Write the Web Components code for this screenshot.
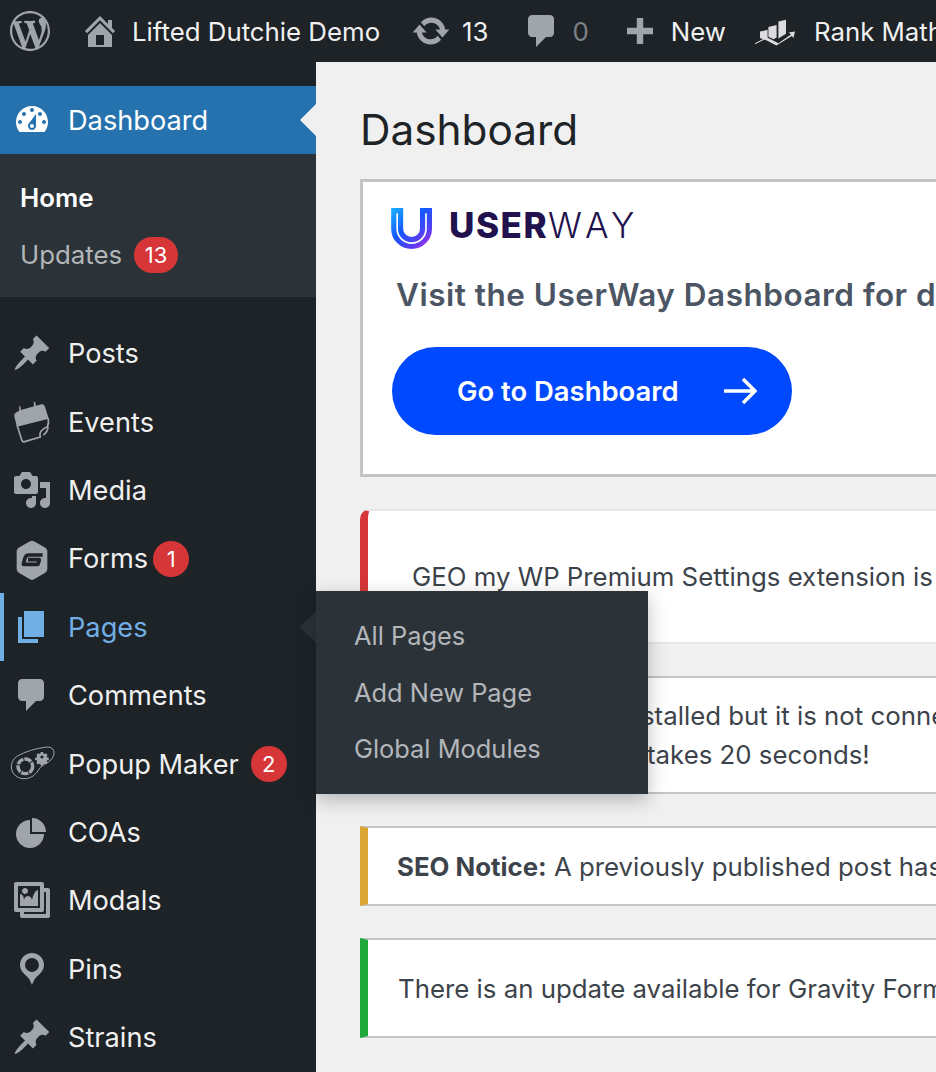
<!DOCTYPE html>
<html lang="en">
<head>
<meta charset="utf-8">
<title>Dashboard</title>
<style>
html, body { margin: 0; height: 1072px; overflow: hidden; background: #f0f0f1; font-family: Inter, "Liberation Sans", sans-serif; }
.page { display: flex; flex-direction: column; height: 1072px; }
.below { display: flex; flex: 1; min-height: 0; }
</style>
</head>
<body>
<div class="page">
  <admin-bar>
    <bar-item icon="wp" gap="0" pad="10" end="30"></bar-item>
    <bar-item icon="home" gap="12" pad="0" end="31">Lifted Dutchie Demo</bar-item>
    <bar-item icon="update" gap="11" pad="0" end="33">13</bar-item>
    <bar-item icon="comment" gap="11" pad="0" end="31" dim>0</bar-item>
    <bar-item icon="plus" gap="11" pad="0" end="29">New</bar-item>
    <bar-item icon="rank" gap="19" pad="0" end="0">Rank Math</bar-item>
  </admin-bar>
  <div class="below">
    <side-menu>
      <menu-item icon="dashboard" current>Dashboard</menu-item>
      <sub-menu>
        <sub-link strong>Home</sub-link>
        <sub-link>Updates<count-badge wide>13</count-badge></sub-link>
      </sub-menu>
      <menu-item icon="pin" first>Posts</menu-item>
      <menu-item icon="events">Events</menu-item>
      <menu-item icon="media">Media</menu-item>
      <menu-item icon="forms">Forms<count-badge tight>1</count-badge></menu-item>
      <menu-item icon="page" open>Pages
        <fly-menu slot="fly">
          <fly-link>All Pages</fly-link>
          <fly-link>Add New Page</fly-link>
          <fly-link>Global Modules</fly-link>
        </fly-menu>
      </menu-item>
      <menu-item icon="comment">Comments</menu-item>
      <menu-item icon="popup">Popup Maker<count-badge>2</count-badge></menu-item>
      <menu-item icon="pie">COAs</menu-item>
      <menu-item icon="gallery">Modals</menu-item>
      <menu-item icon="location">Pins</menu-item>
      <menu-item icon="pin">Strains</menu-item>
    </side-menu>
    <main-area>
      <userway-card></userway-card>
      <wp-notice tone="error" radius height="135" left="44">GEO my WP Premium Settings extension is</wp-notice>
      <wp-notice tone="success" height="118" left="279" style="text-indent:-6px">stalled but it is not conne<br>takes 20 seconds!</wp-notice>
      <wp-notice tone="warning" height="80" left="29"><b>SEO Notice:</b> A previously published post has</wp-notice>
      <wp-notice tone="success" height="100" left="30">There is an update available for Gravity Form</wp-notice>
    </main-area>
  </div>
</div>
<script>
const ICONS = {
  wp: '<path d="M20 10c0-5.51-4.49-10-10-10C4.48 0 0 4.49 0 10c0 5.52 4.48 10 10 10 5.51 0 10-4.48 10-10zM7.78 15.37L4.37 6.22c.55-.02 1.17-.08 1.17-.08.5-.06.44-1.13-.06-1.11 0 0-1.45.11-2.37.11-.18 0-.37 0-.58-.01C4.12 2.69 6.87 1.11 10 1.11c2.33 0 4.45.87 6.05 2.34-.68-.11-1.65.39-1.65 1.58 0 .74.45 1.36.9 2.1.35.61.55 1.36.55 2.46 0 1.49-1.4 5-1.4 5l-3.03-8.37c.54-.02.82-.17.82-.17.5-.05.44-1.25-.06-1.22 0 0-1.44.12-2.38.12-.87 0-2.33-.12-2.33-.12-.5-.03-.56 1.2-.06 1.22l.92.08 1.26 3.41zM17.41 10c.24-.64.74-1.87.43-4.25.7 1.29 1.05 2.71 1.05 4.25 0 3.29-1.73 6.24-4.4 7.78.97-2.59 1.94-5.2 2.92-7.78zM6.1 18.09C3.12 16.65 1.11 13.53 1.11 10c0-1.3.23-2.48.72-3.59C3.25 10.3 4.67 14.2 6.1 18.09zm4.03-6.63l2.58 6.98c-.86.29-1.76.45-2.71.45-.79 0-1.57-.11-2.29-.33.81-2.38 1.62-4.74 2.42-7.1z"/>',
  home: '<path d="M16 8.5l1.53 1.53-1.06 1.06L10 4.62l-6.47 6.47-1.06-1.06L10 2.5l4 4v-2h2v4zm-6-2.46l6 5.99V18H4v-5.97zM12 17v-5H8v5h4z"/>',
  update: '<path d="M10.2 3.28c3.53 0 6.43 2.61 6.92 6h2.08l-3.5 4-3.5-4h2.32c-.45-1.97-2.21-3.45-4.32-3.45-1.45 0-2.73.71-3.54 1.78L4.95 5.66C6.23 4.2 8.11 3.28 10.2 3.28zm-.4 13.44c-3.52 0-6.43-2.61-6.92-6H.8l3.5-4c1.17 1.33 2.33 2.67 3.5 4H5.48c.45 1.97 2.21 3.45 4.32 3.45 1.45 0 2.73-.71 3.54-1.78l1.71 1.95c-1.28 1.46-3.15 2.38-5.25 2.38z"/>',
  comment: '<path d="M5 2h9c1.1 0 2 .9 2 2v7c0 1.1-.9 2-2 2h-2l-5 5v-5H5c-1.1 0-2-.9-2-2V4c0-1.1.9-2 2-2z"/>',
  plus: '<path d="M8.4 3.5h3.2v4.9h4.9v3.2h-4.9v4.9H8.4v-4.9H3.5V8.4h4.9z"/>',
  rank: '<g fill="#dcdcde"><path d="M2.5 10.3l3.8-.9v4.5l-.9.6-2.9-1zM6.7 8l4.1-1v6.3l-1.500.8-2.600-1.200zM11.700 5.200l3.800-.8v7l-3.800 2.400z"/><path d="M0 16.100l5.900-3 5.800 3 6.300-4.300-1.200-1 3.200-.6-.8 3.300-.8-1-7.700 4.700-5.800-3-4.800 2.400z"/></g>',
  dashboard: '<path d="M3.76 16h12.48c1.1-1.37 1.76-3.11 1.76-5 0-4.42-3.58-8-8-8s-8 3.58-8 8c0 1.89.66 3.63 1.76 5zM10 4c.55 0 1 .45 1 1s-.45 1-1 1-1-.45-1-1 .45-1 1-1zM6 6c.55 0 1 .45 1 1s-.45 1-1 1-1-.45-1-1 .45-1 1-1zm8 0c.55 0 1 .45 1 1s-.45 1-1 1-1-.45-1-1 .45-1 1-1zm-5.37 5.55L12 7v6c0 1.1-.9 2-2 2s-2-.9-2-2c0-.57.24-1.08.63-1.45zM4 10c.55 0 1 .45 1 1s-.45 1-1 1-1-.45-1-1 .45-1 1-1zm12 0c.55 0 1 .45 1 1s-.45 1-1 1-1-.45-1-1 .45-1 1-1zm-5 3c0-.55-.45-1-1-1s-1 .45-1 1 .45 1 1 1 1-.45 1-1z"/>',
  pin: '<path d="M10.44 3.02l1.82-1.82 6.36 6.35-1.83 1.82c-1.05-.68-2.48-.57-3.41.36l-.75.75c-.92.93-1.04 2.35-.35 3.41l-1.83 1.82-2.41-2.41-2.8 2.79c-.42.42-3.38 2.71-3.8 2.29s1.86-3.39 2.28-3.81l2.79-2.79L4.1 9.36l1.83-1.82c1.05.69 2.48.57 3.4-.36l.75-.75c.93-.92 1.05-2.35.36-3.41z"/>',
  events: '<path d="M19 62Q17 52 28 47L34 44L33 31H37L39 42L78 31L77 17H81L84 29L100 25Q108 24 111 32L122 68L27 92z"/><path fill="none" stroke="currentColor" stroke-width="5" stroke-linejoin="round" d="M27 86L42 134Q44 139 50 137L97 123Q90 104 118 92Q124 80 120 66M120 92Q120 106 106 117"/>',
  media: '<path d="M13 11V4c0-.55-.45-1-1-1h-1.67L9 1H5L3.67 3H2c-.55 0-1 .45-1 1v7c0 .55.45 1 1 1h10c.55 0 1-.45 1-1zM7 4.5c1.38 0 2.5 1.12 2.5 2.5S8.38 9.5 7 9.5 4.5 8.38 4.5 7 5.62 4.5 7 4.5zM14 6h5v10.5c0 1.38-1.12 2.5-2.5 2.5S14 17.88 14 16.5s1.12-2.5 2.5-2.5c.17 0 .34.02.5.05V9h-3V6zm-4 8.05V13h2v3.5c0 1.38-1.12 2.5-2.5 2.5S7 17.88 7 16.5 8.12 14 9.5 14c.17 0 .34.02.5.05z"/>',
  forms: '<path d="M66 16Q72 12 78 16L112 35Q118 39 118 45V100Q118 106 112 110L78 130Q72 133 66 130L32 110Q26 106 26 100V45Q26 39 32 35z"/><path fill="none" stroke="#1d2327" stroke-width="11" stroke-linejoin="round" d="M104 57H62Q54 57 51 66L46 85H90L94 71H60"/>',
  popup: '<path fill="none" stroke="currentColor" stroke-width="3" d="M16 78Q14 56 34 42Q70 22 122 15Q146 14 144 36Q140 56 116 66Q102 74 92 92Q76 112 48 110Q20 104 16 78z"/><circle cx="58" cy="73" r="22" fill="none" stroke="currentColor" stroke-width="10" stroke-dasharray="22 3"/><path d="M103 27h9l1 6 5 2 5-3 6 6-3 5 2 5 6 1v9l-6 1-2 5 3 5-6 6-5-3-5 2-1 6h-9l-1-6-5-2-5 3-6-6 3-5-2-5-6-1v-9l6-1 2-5-3-5 6-6 5 3 5-2zM107.5 40a6 6 0 1 0 .01 0z" fill-rule="evenodd" transform="translate(24 9) scale(.78)"/>',
  page: '<path d="M6 15V2h10v13H6zm-1 1h8v2H3V5h2v11z"/>',
  pie: '<path d="M10 10V3c3.87 0 7 3.13 7 7h-7zM9 4v7h7c0 3.87-3.13 7-7 7s-7-3.13-7-7 3.13-7 7-7z"/>',
  gallery: '<path d="M16 4h1.96c.57 0 1.04.47 1.04 1.04v12.92c0 .57-.47 1.04-1.04 1.04H5.04C4.47 19 4 18.53 4 17.96V16H2.04C1.47 16 1 15.53 1 14.96V2.04C1 1.47 1.47 1 2.04 1h12.92c.57 0 1.04.47 1.04 1.04V4zM3 14h11V3H3v11zm5-8.5C8 4.67 7.33 4 6.5 4S5 4.67 5 5.5 5.67 7 6.5 7 8 6.33 8 5.5zm2 4.5s1-5 3-5v8H4V7c2 0 2 3 2 3s.33-2 2-2 2 2 2 2zm7 7V6h-1v8.96c0 .57-.47 1.04-1.04 1.04H6v1h11z"/>',
  location: '<path d="M10 2c-3.31 0-6 2.69-6 6 0 2.02 1.17 3.71 2.53 4.89.43.37 1.18.96 1.85 1.83.74.97 1.62 3.28 1.62 3.28s.88-2.31 1.62-3.28c.67-.87 1.42-1.46 1.85-1.83C14.83 11.71 16 10.02 16 8c0-3.31-2.69-6-6-6zm0 2.56c1.9 0 3.44 1.54 3.44 3.44S11.9 11.44 10 11.44 6.56 9.9 6.56 8 8.1 4.56 10 4.56z"/>'
}

// the traced icons are in the pixels of a 3x crop, the rest on the dashicons 20 grid
const VIEWS = { events: "12 18 120 120", forms: "12 6 120 120", popup: "18 6 120 120" }

function svgIcon(name) {
  return `<svg width="40" height="40" viewBox="${VIEWS[name] || "0 0 20 20"}" fill="currentColor" fill-rule="evenodd" style="overflow:visible" aria-hidden="true">${ICONS[name]}</svg>`
}

class AdminBar extends HTMLElement {
  constructor() {
    super()
    this.attachShadow({ mode: "open" }).innerHTML = `
    <style>
    :host { display: flex; align-items: center; height: 62px; flex: none; background: #1d2327; overflow: hidden; white-space: nowrap; }
    </style>
    <slot></slot>`
  }
}

class BarItem extends HTMLElement {
  connectedCallback() {
    this.attachShadow({ mode: "open" }).innerHTML = `
    <style>
    :host { display: flex; flex: none; align-items: center; gap: ${this.getAttribute("gap")}px; padding-left: ${this.getAttribute("pad")}px; margin-right: ${this.getAttribute("end")}px; font-size: 25.8px; color: #f0f0f1; }
    :host([dim]) { color: #7d8286; }
    .ic { display: flex; color: #a0a5aa; }
    </style>
    <span class="ic">${svgIcon(this.getAttribute("icon"))}</span><span><slot></slot></span>`
  }
}

class SideMenu extends HTMLElement {
  constructor() {
    super()
    this.attachShadow({ mode: "open" }).innerHTML = `
    <style>
    :host { display: flex; flex-direction: column; flex: none; width: 316px; padding-top: 24px; box-sizing: border-box; background: #1d2327; position: relative; z-index: 2; }
    </style>
    <slot></slot>`
  }
}

class MenuItem extends HTMLElement {
  connectedCallback() {
    this.attachShadow({ mode: "open" }).innerHTML = `
    <style>
    :host { display: flex; align-items: center; flex: none; height: 68.4px; padding-left: 12px; gap: 16px; font-size: 27.2px; color: #f0f0f1; position: relative; white-space: nowrap; box-sizing: border-box; }
    :host([first]) { margin-top: 22px; }
    :host([current]) { height: 68px; background: #2672ae; color: #fff; }
    :host([current])::after { content: ""; position: absolute; right: 0; top: 50%; margin-top: -16px; border: 16px solid transparent; border-right-color: #f0f0f1; }
    :host([open]) { color: #72aee6; box-shadow: inset 4px 0 0 #72aee6; }
    :host([open])::after { content: ""; position: absolute; right: 0; top: 50%; margin-top: -16px; border: 16px solid transparent; border-right-color: #2c3338; }
    .ic { display: flex; width: 40px; height: 40px; flex: none; color: #a0a5aa; }
    :host([current]) .ic { color: #fff; }
    :host([open]) .ic { color: #72aee6; }
    .label { display: flex; align-items: center; padding-top: 1px; }
    :host([current]) .label { padding-top: 0; }
    </style>
    <span class="ic">${svgIcon(this.getAttribute("icon"))}</span>
    <span class="label"><slot></slot></span>
    <slot name="fly"></slot>`
  }
}

class SubMenu extends HTMLElement {
  constructor() {
    super()
    this.attachShadow({ mode: "open" }).innerHTML = `
    <style>
    :host { display: flex; flex-direction: column; flex: none; height: 143px; padding-top: 15px; box-sizing: border-box; background: #2c3338; }
    </style>
    <slot></slot>`
  }
}

class SubLink extends HTMLElement {
  constructor() {
    super()
    this.attachShadow({ mode: "open" }).innerHTML = `
    <style>
    :host { display: flex; align-items: center; height: 57px; padding-left: 20px; font-size: 25.8px; color: #b3b6b9; }
    :host([strong]) { color: #fff; font-weight: 600; }
    </style>
    <slot></slot>`
  }
}

class CountBadge extends HTMLElement {
  constructor() {
    super()
    this.attachShadow({ mode: "open" }).innerHTML = `
    <style>
    :host { display: inline-flex; align-items: center; justify-content: center; box-sizing: border-box; width: 36px; height: 36px; margin-left: 12px; border-radius: 18px; background: #d63638; color: #fff; font-size: 22px; font-weight: 400; }
    :host([wide]) { width: 44px; }
    :host([tight]) { margin-left: 5px; }
    </style>
    <slot></slot>`
  }
}

class FlyMenu extends HTMLElement {
  constructor() {
    super()
    this.attachShadow({ mode: "open" }).innerHTML = `
    <style>
    :host { position: absolute; left: 316px; top: -2px; width: 332px; height: 203px; padding: 17px 0 0 38px; box-sizing: border-box; display: flex; flex-direction: column; background: #2c3338; box-shadow: 0 6px 18px rgba(0,0,0,.25); z-index: 5; }
    </style>
    <slot></slot>`
  }
}

class FlyLink extends HTMLElement {
  constructor() {
    super()
    this.attachShadow({ mode: "open" }).innerHTML = `
    <style>
    :host { display: flex; align-items: center; height: 56.3px; font-size: 25.4px; color: #b3b6bb; }
    </style>
    <slot></slot>`
  }
}

class MainArea extends HTMLElement {
  constructor() {
    super()
    this.attachShadow({ mode: "open" }).innerHTML = `
    <style>
    :host { display: flex; flex-direction: column; flex: 1; min-width: 0; padding: 0 0 0 44px; box-sizing: border-box; overflow: hidden; gap: 32px; background: #f0f0f1; }
    h1 { margin: 0 0 -17px; height: 102px; display: flex; align-items: center; padding: 32px 0 0 0; box-sizing: border-box; font-size: 42.3px; font-weight: 400; color: #1d2327; }
    </style>
    <h1>Dashboard</h1>
    <slot></slot>`
  }
}

class UserwayCard extends HTMLElement {
  constructor() {
    super()
    this.attachShadow({ mode: "open" }).innerHTML = `
    <style>
    :host { display: block; flex: none; width: 900px; height: 298px; box-sizing: border-box; padding: 20px 0 0 29px; background: #fff; border: 3px solid #c3c4c7; border-right: 0; white-space: nowrap; }
    .logo { display: flex; align-items: center; height: 50px; gap: 9px; margin-left: -6px; }
    .word { font-size: 35px; line-height: 40px; margin-bottom: 4px; color: #21114d; }
    .word b { font-weight: 800; letter-spacing: 1.5px; }
    .word span { font-weight: 300; letter-spacing: 5px; }
    h2 { margin: 23px 0 0 4px; height: 40px; line-height: 40px; font-size: 31.5px; letter-spacing: .5px; font-weight: 600; color: #4b5563; }
    .go { display: flex; align-items: center; width: 400px; height: 88px; margin-top: 32px; padding-left: 65px; box-sizing: border-box; border-radius: 44px; background: #0049ff; color: #fff; font-size: 27.4px; font-weight: 600; }
    .go svg { margin-left: 45px; }
    </style>
    <div class="logo">
      <svg width="54" height="50" viewBox="0 0 162 150" fill="none" aria-hidden="true">
        <defs><linearGradient id="uw" gradientUnits="userSpaceOnUse" x1="10" y1="10" x2="135" y2="145"><stop offset="0" stop-color="#1cc0ff"/><stop offset=".45" stop-color="#1557ff"/><stop offset=".75" stop-color="#5a3df0"/><stop offset="1" stop-color="#d42be6"/></linearGradient></defs>
        <path d="M33.5 18V80a43.25 43.25 0 0 0 86.5 0V18" stroke="url(#uw)" stroke-width="36"/>
        <path d="M33.5 34V80a43.25 43.25 0 0 0 86.5 0V34" stroke="#fff" stroke-width="5"/>
      </svg>
      <span class="word"><b>USER</b><span>WAY</span></span>
    </div>
    <h2>Visit the UserWay Dashboard for d</h2>
    <div class="go">Go to Dashboard
      <svg width="33" height="28" viewBox="0 0 33 28" fill="none" stroke="#fff" stroke-width="3.5"><path d="M0 14h31M19 2l12 12-12 12"/></svg>
    </div>`
  }
}

class WpNotice extends HTMLElement {
  connectedCallback() {
    const colours = { error: "#d63638", success: "#1ea83c", warning: "#dba633" }
    this.attachShadow({ mode: "open" }).innerHTML = `
    <style>
    :host { display: flex; flex: none; align-items: center; width: 900px; height: ${this.getAttribute("height")}px; box-sizing: border-box; padding-left: ${this.getAttribute("left")}px; background: #fff; border: 0 solid #c3c4c7; border-width: 2px 0; border-left: 8px solid ${colours[this.getAttribute("tone")]}; font-size: 25.8px; line-height: 39px; color: #3c434a; white-space: nowrap; }
    :host([radius]) { border-top-left-radius: 10px; border-top-color: #e5e7eb; border-bottom-color: #e5e7eb; }
    ::slotted(b) { font-weight: 700; }
    </style>
    <div><slot></slot></div>`
  }
}

customElements.define("admin-bar", AdminBar)
customElements.define("bar-item", BarItem)
customElements.define("side-menu", SideMenu)
customElements.define("menu-item", MenuItem)
customElements.define("sub-menu", SubMenu)
customElements.define("sub-link", SubLink)
customElements.define("count-badge", CountBadge)
customElements.define("fly-menu", FlyMenu)
customElements.define("fly-link", FlyLink)
customElements.define("main-area", MainArea)
customElements.define("userway-card", UserwayCard)
customElements.define("wp-notice", WpNotice)
</script>
</body>
</html>
